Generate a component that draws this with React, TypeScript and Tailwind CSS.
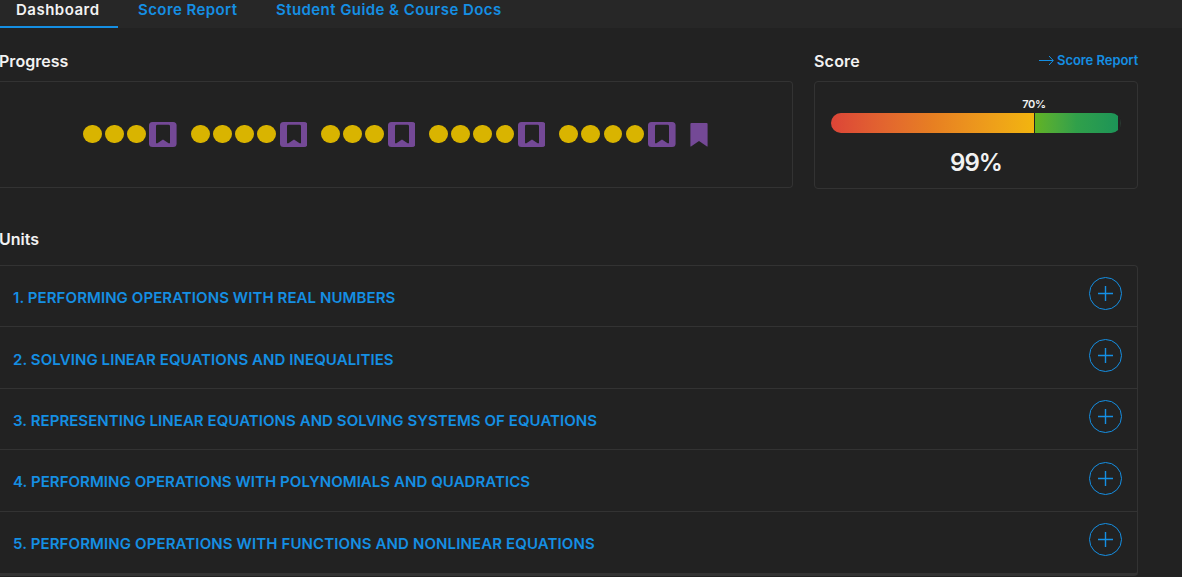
const tabs = [
  { label: "Dashboard", className: "ml-4 w-[84px] tracking-[0.5px] text-[#f2f2f2]" },
  { label: "Score Report", className: "ml-[38px] w-[100px] tracking-[0.42px] text-[#158fe3]" },
  { label: "Student Guide & Course Docs", className: "ml-[38px] tracking-[0.43px] text-[#158fe3]" },
];

const lessonCounts = [3, 4, 3, 4, 4];

const units = [
  { title: "1. PERFORMING OPERATIONS WITH REAL NUMBERS", tracking: "tracking-[0.08px]" },
  { title: "2. SOLVING LINEAR EQUATIONS AND INEQUALITIES", tracking: "tracking-[0.08px]" },
  { title: "3. REPRESENTING LINEAR EQUATIONS AND SOLVING SYSTEMS OF EQUATIONS", tracking: "tracking-[0.06px]" },
  { title: "4. PERFORMING OPERATIONS WITH POLYNOMIALS AND QUADRATICS", tracking: "tracking-[0.06px]" },
  { title: "5. PERFORMING OPERATIONS WITH FUNCTIONS AND NONLINEAR EQUATIONS", tracking: "tracking-[0.12px]" },
];

const UnitTest = () => (
  <svg className="h-[25px] w-[27.6px]" viewBox="0 0 27.6 25">
    <rect width="27.6" height="25" rx="3.5" fill="#744996" />
    <path d="M8.4 2.8h11.2q1.4 0 1.4 1.4V21.2h-1.4L14 17.4 8.4 21.2H7V4.2Q7 2.8 8.4 2.8z" fill="#222222" />
  </svg>
);

const FinalTest = () => (
  <svg className="mt-px h-6 w-[18px]" viewBox="0 0 18 24">
    <path d="M1.4 0h15.2q1 0 1 1v22.6h-.6L9 18 1 23.6H.4V1q0-1 1-1z" fill="#744996" />
  </svg>
);

const PlusButton = () => (
  <button className="mr-[15px] mb-[4.7px]">
    <svg width="33" height="33" viewBox="0 0 33 33" fill="none" stroke="#158fe3">
      <circle cx="16.5" cy="16.5" r="16" strokeWidth="1" />
      <path d="M9 16.5h15M16.5 9v15" strokeWidth="1.4" />
    </svg>
  </button>
);

const Progress = () => (
  <div className="w-[793px]">
    <h2 className="h-[30px] -ml-px text-base leading-5 font-semibold tracking-[0.03px]">Progress</h2>
    <div className="flex h-[107px] rounded-r border border-l-0 border-[#333333] pt-10 pl-[83px]">
      {lessonCounts.map((count, i) => (
        <div key={i} className="mr-3.5 flex h-[25px] items-center">
          {Array.from({ length: count }, (_, j) => (
            <span key={j} className="mr-[3.65px] mb-[0.6px] h-[18.5px] w-[18.5px] rounded-full bg-[#d9b400]" />
          ))}
          <UnitTest />
        </div>
      ))}
      <FinalTest />
    </div>
  </div>
);

const Score = () => (
  <div className="ml-[21px] w-[324px]">
    <div className="flex h-[30px] justify-between">
      <h2 className="text-base leading-5 font-semibold tracking-[0.2px]">Score</h2>
      <a href="#" className="flex h-5 items-center text-[13px] font-semibold text-[#158fe3]">
        <svg className="mr-[3px] mb-0.5" width="15" height="11" viewBox="0 0 15 11" fill="none" stroke="#158fe3">
          <path d="M0 5.5h14M10 1l4.3 4.5L10 10" />
        </svg>
        <span className="w-[81px] tracking-[-0.05px] whitespace-nowrap">Score Report</span>
      </a>
    </div>
    <div className="h-[108px] rounded border border-[#333333] px-4 pt-4">
      <div className="w-[406px] -mt-px text-center text-[11px] leading-[14px] font-semibold tracking-[-0.3px]">70%</div>
      <div className="mt-0.5 flex h-5 w-[290px] overflow-hidden rounded-full bg-[#2a3a32]">
        <div className="w-[203px] bg-linear-to-r from-[#dc4437] via-[#e77f22] to-[#f2b50e]" />
        <div className="w-px bg-[#222222]" />
        <div className="w-[83px] bg-linear-to-r from-[#61b321] via-[#30a04a] to-[#1c9457]" />
        <div className="mr-px flex-1 rounded-r-full bg-[#222222]" />
      </div>
      <div className="mt-[14px] text-center text-2xl leading-8 font-semibold tracking-[-1px]">99%</div>
    </div>
  </div>
);

const Units = () => (
  <div className="mt-10 w-[1138px]">
    <h2 className="h-9 -ml-px text-base leading-5 font-semibold">Units</h2>
    <ul className="rounded-r border border-b-[3px] border-l-0 border-[#333333]">
      {units.map((unit) => (
        <li key={unit.title} className="flex h-[61.4px] items-center justify-between border-b border-[#333333] last:border-b-0">
          <a href="#" className={`mt-[4.4px] ml-[13px] text-[15px] font-semibold whitespace-nowrap text-[#158fe3] ${unit.tracking}`}>
            {unit.title}
          </a>
          <PlusButton />
        </li>
      ))}
    </ul>
  </div>
);

const App = () => {
  return (
    <div className="h-[577px] overflow-hidden bg-[#222222] font-['Inter',sans-serif] text-[#f2f2f2]">
      <nav className="relative flex h-7 bg-[#272727] text-[15px] leading-5 font-semibold whitespace-nowrap">
        {tabs.map((tab) => (
          <a key={tab.label} href="#" className={tab.className}>{tab.label}</a>
        ))}
        <span className="absolute bottom-0 left-0 h-0.5 w-[118px] bg-[#158fe3]" />
      </nav>
      <main className="pt-[23px]">
        <div className="flex">
          <Progress />
          <Score />
        </div>
        <Units />
      </main>
    </div>
  );
};

export default App;
